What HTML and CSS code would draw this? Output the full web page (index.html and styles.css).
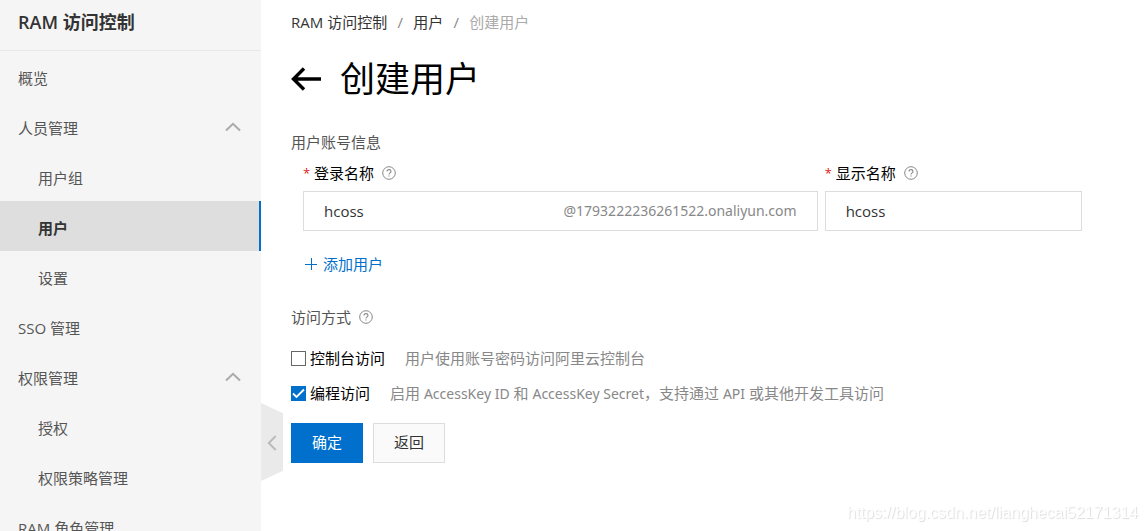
FILE: index.html
```html
<!DOCTYPE html>
<html lang="zh-CN">
<head>
<meta charset="utf-8">
<title>RAM 访问控制 - 创建用户</title>
<link rel="stylesheet" href="styles.css">
</head>
<body>
<svg class="sprite" aria-hidden="true">
  <symbol id="help" viewBox="0 0 14 14">
    <circle cx="7" cy="7" r="6.3" fill="none" stroke="currentColor"/>
    <path d="M5 5.6C5 4.3 5.8 3.6 7 3.6s2 .7 2 1.8C9 6.8 7 6.9 7 8.4M7 9.4v1.2" fill="none" stroke="currentColor" stroke-width="1.1"/>
  </symbol>
  <symbol id="chevron" viewBox="0 0 16 10">
    <path d="M1 8.5 8 1.8l7 6.7" fill="none" stroke="currentColor" stroke-width="2"/>
  </symbol>
</svg>
<div class="layout">
  <aside class="sidebar">
    <h2 class="sidebar-title">RAM 访问控制</h2>
    <nav class="menu">
      <a class="menu-item" href="#">概览</a>
      <button class="menu-item" type="button" aria-expanded="true">人员管理<svg class="chevron"><use href="#chevron"/></svg></button>
      <a class="menu-item menu-sub" href="#">用户组</a>
      <a class="menu-item menu-sub menu-active" href="#" aria-current="page">用户</a>
      <a class="menu-item menu-sub" href="#">设置</a>
      <a class="menu-item" href="#">SSO 管理</a>
      <button class="menu-item" type="button" aria-expanded="true">权限管理<svg class="chevron"><use href="#chevron"/></svg></button>
      <a class="menu-item menu-sub" href="#">授权</a>
      <a class="menu-item menu-sub" href="#">权限策略管理</a>
      <a class="menu-item" href="#">RAM 角色管理</a>
    </nav>
  </aside>
  <main class="content">
    <button class="collapse" type="button" aria-label="收起">
      <svg class="collapse-icon" viewBox="0 0 10 16"><path d="M8.7 1 1.8 8l6.9 7" fill="none" stroke="currentColor" stroke-width="2"/></svg>
    </button>
    <nav class="breadcrumb">
      <a href="#">RAM 访问控制</a><span class="slash">/</span><a href="#">用户</a><span class="slash">/</span><span class="current">创建用户</span>
    </nav>
    <header class="page-head">
      <a class="back" href="#" aria-label="返回上一页"><svg class="back-icon" viewBox="0 0 30 24"><path d="M30 12H2.5M13 1.5 2.5 12 13 22.5" fill="none" stroke="currentColor" stroke-width="3.4"/></svg></a>
      <h1 class="page-title">创建用户</h1>
    </header>
    <form>
      <h3 class="section-title">用户账号信息</h3>
      <div class="account">
        <div class="field">
          <div class="field-head"><span class="required">*</span><label for="login">登录名称</label><svg class="help"><use href="#help"/></svg></div>
          <div class="box"><input class="text-input" id="login" type="text" value="hcoss"><span class="suffix">@1793222236261522.onaliyun.com</span></div>
        </div>
        <div class="field">
          <div class="field-head"><span class="required">*</span><label for="display">显示名称</label><svg class="help"><use href="#help"/></svg></div>
          <div class="box"><input class="text-input" id="display" type="text" value="hcoss"></div>
        </div>
      </div>
      <button class="add" type="button"><svg class="plus" viewBox="0 0 12 12"><path d="M6.5 0v12M0 6.5h12" stroke="currentColor"/></svg>添加用户</button>
      <h3 class="section-title access-title">访问方式<svg class="help"><use href="#help"/></svg></h3>
      <div class="option"><input class="check" id="console" type="checkbox"><label for="console">控制台访问</label><span class="hint">用户使用账号密码访问阿里云控制台</span></div>
      <div class="option"><input class="check" id="api" type="checkbox" checked><label for="api">编程访问</label><span class="hint">启用 <span class="term">AccessKey ID</span> 和 <span class="term">AccessKey Secret</span>，支持通过 <span class="term">API</span> 或其他开发工具访问</span></div>
      <div class="actions">
        <button class="btn btn-primary" type="submit">确定</button>
        <button class="btn" type="button">返回</button>
      </div>
    </form>
  </main>
</div>
<div class="watermark">https://blog.csdn.net/lianghecai52171314</div>
</body>
</html>
```
FILE: styles.css
```css
* { box-sizing: border-box; }
body {
  margin: 0;
  background: #fff;
  color: #000;
  font: 15px/20px "Open Sans", "Noto Sans CJK SC", sans-serif;
}
h1, h2, h3 { margin: 0; font-weight: 400; }
a { color: inherit; text-decoration: none; }
button, input { font: inherit; color: inherit; }
button { cursor: pointer; }
.sprite { position: absolute; width: 0; height: 0; }

.layout { display: flex; height: 100vh; overflow: hidden; }
.sidebar { flex: 0 0 261px; background: #f5f5f5; overflow: hidden; }
.sidebar-title {
  height: 51px;
  padding: 12px 18px;
  border-bottom: 1px solid #e8e8e8;
  color: #333;
  font-size: 18px;
  font-weight: 600;
}
.menu { display: flex; flex-direction: column; }
.menu-item {
  display: flex;
  align-items: center;
  justify-content: space-between;
  height: 50px;
  padding: 4px 20px 0 18px;
  border: 0;
  background: none;
  color: #555;
  text-align: left;
}
.menu-sub { padding-left: 38px; }
.menu-active {
  border-right: 2px solid #0070cc;
  background: #dedede;
  color: #333;
  font-weight: 700;
}
.chevron { width: 16px; height: 10px; margin-bottom: 2px; color: #aaa; }

.content { position: relative; flex: 1; min-width: 0; padding: 12px 65px 0 30px; }
.collapse {
  position: absolute;
  left: 0;
  top: 403px;
  width: 22px;
  height: 78px;
  padding: 2px 0 0;
  border: 0;
  background: #eaeaea;
  clip-path: polygon(0 0, 100% 13%, 100% 87%, 0 100%);
  color: #bbb;
}
.collapse-icon { display: block; width: 10px; height: 16px; margin: 0 auto; }
.breadcrumb { display: flex; color: #333; }
.slash { width: 26px; text-align: center; color: #888; }
.current { color: #aaa; }
.page-head { display: flex; align-items: center; gap: 19px; margin: 22px 0 28px; }
.back-icon { display: block; width: 30px; height: 24px; }
.page-title { font-size: 35px; line-height: 50px; }

.section-title { color: #555; font-size: 15px; }
.account { display: grid; grid-template-columns: 2fr 1fr; gap: 7px; padding: 11px 0 0 12px; }
.field-head { display: flex; align-items: center; margin-bottom: 8px; }
.required { width: 11px; color: #e02020; font-size: 13px; }
.help { width: 14px; height: 14px; margin-left: 8px; color: #888; }
.box { display: flex; align-items: center; height: 40px; padding: 0 20px; border: 1px solid #ddd; }
.text-input { flex: 1; width: 0; padding: 0; border: 0; outline: 0; background: none; color: #333; }
.suffix, .term { font-family: "Noto Sans", sans-serif; font-size: 14px; line-height: 16px; }
.suffix { color: #888; }
.add {
  display: flex;
  align-items: center;
  gap: 6px;
  margin: 23px 0 33px 14px;
  padding: 0;
  border: 0;
  background: none;
  color: #0070cc;
}
.plus { width: 12px; height: 12px; }
.access-title { display: flex; align-items: center; margin-bottom: 21px; }
.option { display: flex; align-items: center; margin-bottom: 15px; }
.check {
  appearance: none;
  width: 15px;
  height: 15px;
  margin: 0 4px 0 0;
  border: 1px solid #666;
  background: #fff;
}
.check:checked {
  border-color: #0070cc;
  background: #0070cc url("data:image/svg+xml,%3Csvg xmlns='http://www.w3.org/2000/svg' viewBox='0 0 13 13'%3E%3Cpath d='M1 6.5 4.5 10 12 2.5' fill='none' stroke='white' stroke-width='1.8'/%3E%3C/svg%3E") center / 13px 13px no-repeat;
}
.hint { margin-left: 20px; color: #888; }
.actions { display: flex; gap: 10px; padding-top: 5px; }
.btn { height: 40px; padding: 0 20px 2px; border: 1px solid #ddd; background: #fafafa; color: #333; }
.btn-primary { border-color: #0070cc; background: #0070cc; color: #fff; }
.watermark {
  position: fixed;
  right: 9px;
  bottom: 8px;
  color: #fff;
  font: 16px/20px "Liberation Sans", Arial, sans-serif;
  text-shadow: 1px 1px 1px #ddd;
  pointer-events: none;
}
```
